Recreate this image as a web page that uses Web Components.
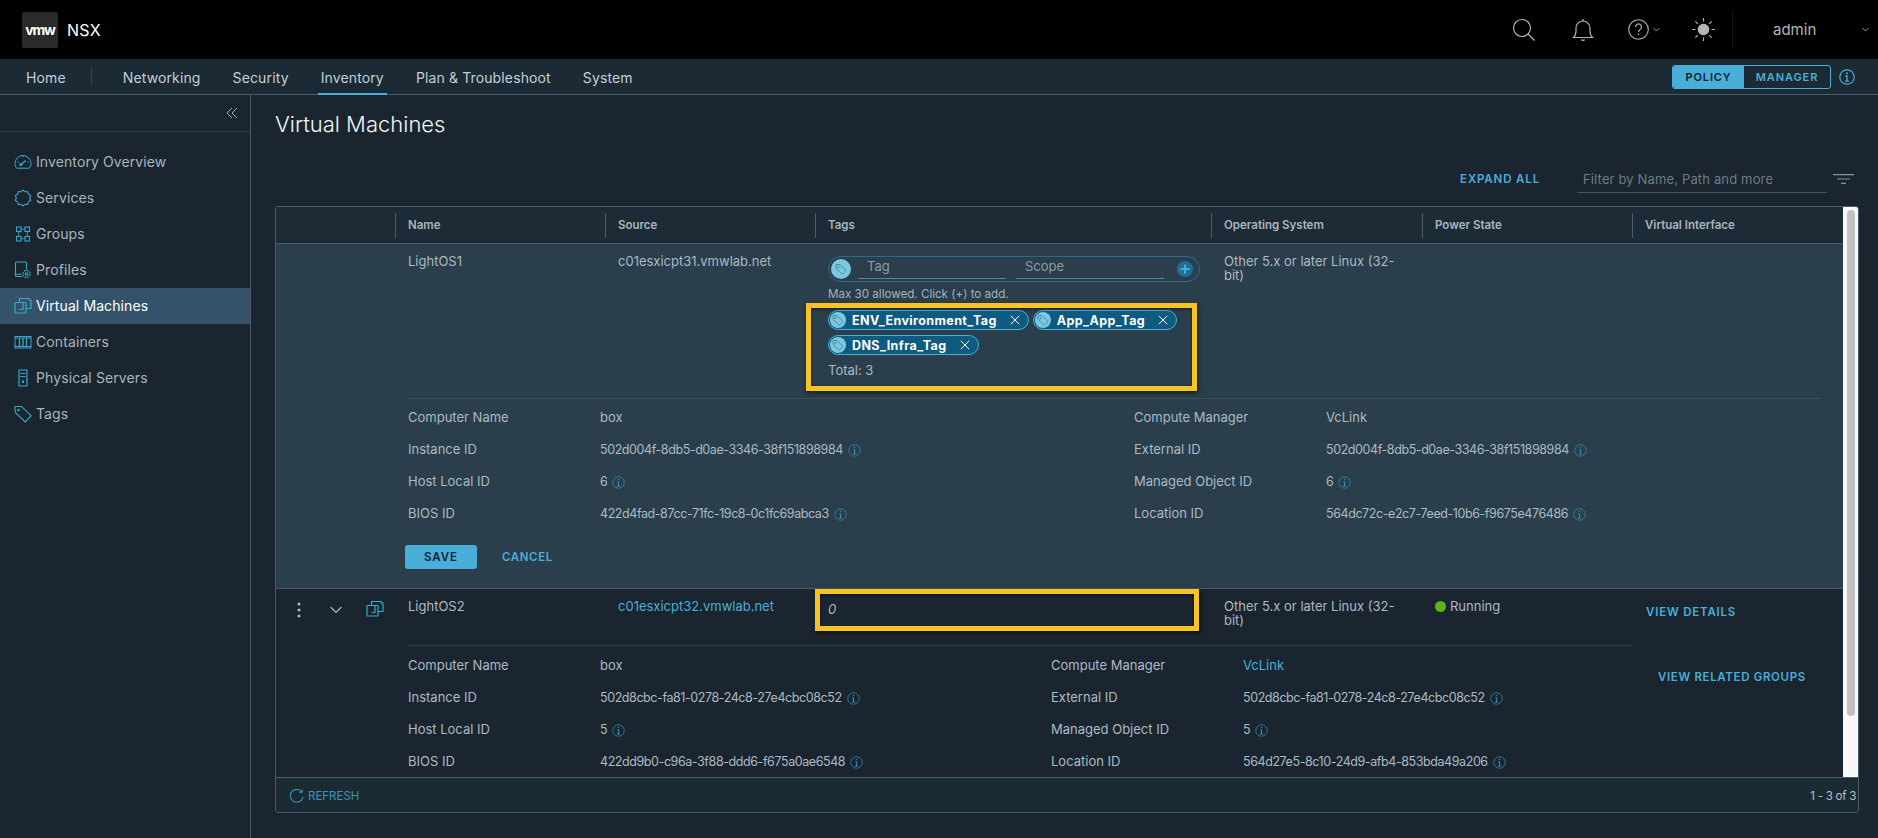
<!DOCTYPE html>
<html lang="en"><head><meta charset="utf-8"><title>NSX</title>
<style>
html,body{margin:0;padding:0;background:#1a2530;}
body{width:1878px;height:838px;overflow:hidden;font-family:Inter,"Liberation Sans",sans-serif;font-size:13px;color:#acbac3;display:flex;flex-direction:column;}
main{display:flex;flex:1;min-height:0;}
</style></head>
<body>
<nsx-header></nsx-header>
<nsx-nav>
  <nav-link plain>Home</nav-link><nav-sep></nav-sep>
  <nav-link>Networking</nav-link><nav-link>Security</nav-link><nav-link active>Inventory</nav-link><nav-link>Plan &amp; Troubleshoot</nav-link><nav-link>System</nav-link>
</nsx-nav>
<main>
  <nsx-sidebar>
    <side-item icon="gauge">Inventory Overview</side-item>
    <side-item icon="gear">Services</side-item>
    <side-item icon="groups">Groups</side-item>
    <side-item icon="profile">Profiles</side-item>
    <side-item icon="vm" active>Virtual Machines</side-item>
    <side-item icon="container">Containers</side-item>
    <side-item icon="server">Physical Servers</side-item>
    <side-item icon="tag">Tags</side-item>
  </nsx-sidebar>
  <vm-page>
    <vm-grid>
      <vm-row-one>
        <span slot="name">LightOS1</span>
        <span slot="source">c01esxicpt31.vmwlab.net</span>
        <span slot="os">Other 5.x or later Linux (32-bit)</span>
        <tag-editor slot="tags">
          <tag-pill>ENV_Environment_Tag</tag-pill>
          <tag-pill>App_App_Tag</tag-pill>
          <tag-pill>DNS_Infra_Tag</tag-pill>
        </tag-editor>
        <detail-grid slot="details" style="--split:726px">
          <detail-row label="Computer Name">box</detail-row>
          <detail-row label="Instance ID" info>502d004f-8db5-d0ae-3346-38f151898984</detail-row>
          <detail-row label="Host Local ID" info>6</detail-row>
          <detail-row label="BIOS ID" info>422d4fad-87cc-71fc-19c8-0c1fc69abca3</detail-row>
          <detail-row label="Compute Manager">VcLink</detail-row>
          <detail-row label="External ID" info>502d004f-8db5-d0ae-3346-38f151898984</detail-row>
          <detail-row label="Managed Object ID" info>6</detail-row>
          <detail-row label="Location ID" info>564dc72c-e2c7-7eed-10b6-f9675e476486</detail-row>
        </detail-grid>
      </vm-row-one>
      <vm-row-two>
        <span slot="name">LightOS2</span>
        <span slot="source">c01esxicpt32.vmwlab.net</span>
        <span slot="os">Other 5.x or later Linux (32-bit)</span>
        <detail-grid slot="details" style="--split:643px">
          <detail-row label="Computer Name">box</detail-row>
          <detail-row label="Instance ID" info>502d8cbc-fa81-0278-24c8-27e4cbc08c52</detail-row>
          <detail-row label="Host Local ID" info>5</detail-row>
          <detail-row label="BIOS ID" info>422dd9b0-c96a-3f88-ddd6-f675a0ae6548</detail-row>
          <detail-row label="Compute Manager" link>VcLink</detail-row>
          <detail-row label="External ID" info>502d8cbc-fa81-0278-24c8-27e4cbc08c52</detail-row>
          <detail-row label="Managed Object ID" info>5</detail-row>
          <detail-row label="Location ID" info>564d27e5-8c10-24d9-afb4-853bda49a206</detail-row>
        </detail-grid>
      </vm-row-two>
    </vm-grid>
  </vm-page>
</main>
<script>
const TEAL='#36a9c9';
const ICONS={
gauge:`<svg viewBox="0 0 18 18" fill="none" stroke="${TEAL}" stroke-width="1"><path d="M2.6 15.200h12.800c1-1.300 1.600-3 1.600-4.700A8 8 0 0 0 1 10.500c0 1.700.6 3.400 1.600 4.700z"/><path d="M7 11.600l4.800-4.100" stroke-width="1.300"/><circle cx="6.800" cy="11.600" r="1.100" fill="${TEAL}"/><path d="M9 2.800v1.500M3.400 9h1.300M13.400 9h1.300" stroke-width=".9"/></svg>`,
gear:`<svg viewBox="0 0 18 18" fill="none" stroke="${TEAL}" stroke-width="1.100"><path d="M9 1l2 1.800 2.700-.3.700 2.600 2.300 1.400-1 2.500 1 2.500-2.300 1.400-.7 2.600-2.700-.3L9 17l-2-1.800-2.700.3-.7-2.600-2.300-1.400 1-2.500-1-2.500 2.300-1.400.7-2.600 2.700.3z"/></svg>`,
groups:`<svg viewBox="0 0 18 18" fill="none" stroke="${TEAL}" stroke-width="1.100"><rect x="2.500" y="2" width="4.500" height="4.500"/><rect x="11" y="2" width="4.500" height="4.500"/><rect x="2.500" y="11.500" width="4.500" height="4.500"/><rect x="11" y="11.500" width="4.500" height="4.500"/><path d="M7 4.200h4M4.700 6.500v5M13.300 6.500v5M7 13.700h4" stroke-width=".9"/></svg>`,
profile:`<svg viewBox="0 0 18 18" fill="none" stroke="${TEAL}" stroke-width="1.100"><path d="M8 15.500H2.500a1 1 0 0 1-1-1V2a1 1 0 0 1 1-1h9a1 1 0 0 1 1 1v6.500"/><path d="M1.500 13.200h6"/><circle cx="12.500" cy="13" r="3.600" stroke-dasharray="2 .8"/><circle cx="12.500" cy="13" r="1.300"/></svg>`,
vm:`<svg viewBox="0 0 18 18" fill="none" stroke="${TEAL}" stroke-width="1.200"><path d="M5.500 5V1.500h9.500V3h2v8.500h-5.500"/><rect x="1" y="5.500" width="11" height="10.500" rx=".5"/><path d="M9 5.500v7H5.500"/></svg>`,
container:`<svg viewBox="0 0 18 18" fill="none" stroke="${TEAL}" stroke-width="1"><rect x="1" y="3.500" width="16" height="11.500"/><path d="M1 5h16M1 13.500h16"/><path d="M5.500 5v8.500M9 5v8.500M12.500 5v8.500" stroke-width="1.300"/></svg>`,
server:`<svg viewBox="0 0 18 18" fill="none" stroke="${TEAL}" stroke-width="1.200"><rect x="5" y="1" width="8" height="16" rx=".5"/><path d="M6.500 4.500h5M6.500 7.500h5" /><path d="M9 11.500v2.500" stroke-width="2"/></svg>`,
tag:`<svg viewBox="0 0 18 18" fill="none" stroke="${TEAL}" stroke-width="1.100"><path d="M1 4.500V1.500h6.500l9.700 9.200-5.900 6.300L1.700 8z"/><circle cx="4.500" cy="5" r=".8"/></svg>`,
info:`<svg viewBox="0 0 16 16" fill="none" stroke="currentColor"><circle cx="8" cy="8" r="7" stroke-width="1.200" stroke-dasharray="2.100 .4"/><path d="M8 3.500v1.500" stroke-width="1.700"/><path d="M6.500 7H8v5M6 12.200h4" stroke-width="1.300"/></svg>`,
infoBig:`<svg viewBox="0 0 16 16" fill="none" stroke="currentColor"><circle cx="8" cy="8" r="7.200" stroke-width="1.200"/><path d="M8 3.500v1.800" stroke-width="1.800"/><path d="M6.300 7H8v5M6 12.200h4" stroke-width="1.300"/></svg>`,
tagSmall:`<svg viewBox="0 0 16 16" fill="none" stroke="currentColor" stroke-width="1"><path d="M3 3.500h4l6 6-3.800 3.800-6.200-6z"/><circle cx="5.500" cy="6" r=".7"/></svg>`,
close:`<svg viewBox="0 0 10 10" fill="none" stroke="#fff" stroke-width="1"><path d="M.8.800l8.400 8.400M9.200.8L.8 9.200"/></svg>`
};
function define(name,html,extra){
  const tpl=document.createElement('template');tpl.innerHTML=html;
  customElements.define(name,class extends HTMLElement{
    constructor(){super();this.attachShadow({mode:'open'}).appendChild(tpl.content.cloneNode(true));}
    connectedCallback(){if(extra)extra(this,this.shadowRoot);}
  });
}
define('nsx-icon',`<style>:host{display:inline-flex;width:var(--s,18px);height:var(--s,18px);flex:none}span,svg{display:block;width:100%;height:100%}</style><span></span>`,
  (el,r)=>{r.querySelector('span').innerHTML=ICONS[el.getAttribute('name')]||'';});

define('nsx-header',`<style>
:host{display:flex;align-items:center;height:59px;background:#000;flex:none;position:relative}
.logo{width:36px;height:36px;margin-left:22px;background:#2a2a2a;border-radius:2px;display:flex;align-items:center;justify-content:center;color:#fff;font:700 14px/1 Inter,sans-serif;letter-spacing:-1.200px}
.nsx{margin-left:9px;color:#fff;font-size:16px;letter-spacing:.3px}
.right{margin-left:auto;display:flex;align-items:center;height:100%;color:#b4b4b4}
svg{display:block;flex:none}
.sep{width:1px;height:39px;background:#141414;margin-left:17px}
.admin{margin-left:40px;font-size:15px;width:81px}
</style>
<div class="logo">vmw</div><div class="nsx">NSX</div>
<div class="right">
<svg width="24" height="24" viewBox="0 0 24 24" fill="none" stroke="#b4b4b4" stroke-width="1.200" style="margin-right:36px"><circle cx="10" cy="10" r="8.500"/><path d="M16 16l6.500 6.500"/></svg>
<svg width="22" height="24" viewBox="0 0 22 24" fill="none" stroke="#b4b4b4" stroke-width="1.200" style="margin-right:34px"><path d="M1.500 19.500c2-1.700 2.500-3.500 2.500-6.500V10a7 7 0 0 1 14 0v3c0 3 .5 4.800 2.500 6.500z"/><path d="M11 1v2" /><path d="M9.500 21.500c.4 1.200 2.600 1.200 3 0" stroke-width="1.400"/></svg>
<svg width="21" height="21" viewBox="0 0 21 21" fill="none" stroke="#b4b4b4" stroke-width="1.100"><circle cx="10.500" cy="10.500" r="9.800"/><path d="M7.500 8a3 3 0 1 1 4.600 2.500c-1 .7-1.600 1.300-1.600 2.600M10.500 14.500v1.500" stroke-width="1.200"/></svg>
<svg width="7" height="5" viewBox="0 0 7 5" fill="none" stroke="#9a9a9a" style="margin:0 32px 0 4px"><path d="M.5 1l3 3 3-3"/></svg>
<svg width="23" height="23" viewBox="0 0 23 23" fill="#b4b4b4" stroke="#b4b4b4" stroke-width="1.200"><circle cx="11.500" cy="11.500" r="5.800" stroke="none"/><path d="M11.500 0v3.400M11.500 19.600V23M0 11.500h3.400M19.600 11.500H23M3.400 3.400l2.400 2.400M17.200 17.200l2.400 2.400M3.400 19.600l2.400-2.400M17.200 5.800l2.400-2.400" fill="none"/></svg>
<div class="sep"></div>
<div class="admin">admin</div>
<svg width="7" height="5" viewBox="0 0 7 5" fill="none" stroke="#9a9a9a" style="margin-right:9px;margin-left:8px"><path d="M.5 1l3 3 3-3"/></svg>
</div>`);

define('nsx-nav',`<style>
:host{display:flex;align-items:stretch;height:35px;background:#1b2a34;border-bottom:1px solid #4b5c68;flex:none;padding:0 23px 0 23px}
.bar{display:flex;align-items:stretch;gap:26px}
.mode{margin-left:auto;align-self:center;display:flex;align-items:center}
.seg{display:flex;height:24px;box-sizing:border-box;border:1px solid #49afd9;border-radius:3px;overflow:hidden;font-size:11px;font-weight:600;letter-spacing:.9px;width:159px}
.seg b{font-weight:600;display:flex;align-items:center;justify-content:center}
.p{width:71px;background:#49afd9;color:#0e2430}
.m{flex:1;color:#49afd9}
nsx-icon{--s:16px;color:#49afd9;margin-left:8px}
</style>
<div class="bar"><slot></slot></div>
<div class="mode"><div class="seg"><b class="p">POLICY</b><b class="m">MANAGER</b></div><nsx-icon name="infoBig"></nsx-icon></div>`);
define('nav-link',`<style>
:host{display:flex;align-items:center;padding:3px 3px 0;box-sizing:border-box;font-size:14px;letter-spacing:.13px;color:#c4cfd6;border-bottom:2px solid transparent;margin-bottom:-1px;white-space:nowrap;height:36px}
:host([active]){border-bottom-color:#49afd9;}
</style><slot></slot>`);
define('nav-sep',`<style>:host{display:block;width:1px;height:18px;background:#34444f;align-self:center;margin:-2px 2px 0 -4px}</style>`);

define('nsx-sidebar',`<style>
:host{display:block;width:250px;flex:none;border-right:1px solid #4b5c68;height:100%;box-sizing:content-box}
.top{height:36px;border-bottom:1px solid #2b3944;display:flex;align-items:center;justify-content:flex-end;padding-right:12px}
.list{padding-top:12px}
</style>
<div class="top"><svg width="12" height="12" viewBox="0 0 12 12" fill="none" stroke="#9fb0ba"><path d="M6 1L1 6l5 5M11 1L6 6l5 5"/></svg></div>
<div class="list"><slot></slot></div>`);
define('side-item',`<style>
:host{display:flex;align-items:center;height:36px;padding-left:14px;padding-bottom:1px;box-sizing:border-box;font-size:14px;letter-spacing:.1px;color:#a7b5be;gap:4px;white-space:nowrap}
:host([active]){background:#34536a;color:#fff}
nsx-icon{margin-top:1px}
</style><nsx-icon></nsx-icon><slot></slot>`,(el,r)=>{r.querySelector('nsx-icon').setAttribute('name',el.getAttribute('icon'));
 const i=r.querySelector('nsx-icon');i.shadowRoot.querySelector('span').innerHTML=ICONS[el.getAttribute('icon')];});

define('vm-page',`<style>
:host{display:flex;flex-direction:column;flex:1;min-width:0;padding:14px 19px 0 24px;box-sizing:border-box}
h1{margin:0;font-weight:300;font-size:22px;line-height:30px;color:#f2f5f6}
.tools{display:flex;align-items:center;justify-content:flex-end;height:28px;margin:26px 5px 13px 0}
.exp{font-size:11.500px;font-weight:600;letter-spacing:.85px;color:#49afd9;margin-right:37px}
.filter{width:244px;padding-left:6px;height:27px;line-height:28px;border-bottom:1px solid #44535e;font-size:13px;letter-spacing:.15px;color:#6d7b85}
svg{margin-left:6px;display:block}
</style>
<h1>Virtual Machines</h1>
<div class="tools"><span class="exp">EXPAND ALL</span><div class="filter">Filter by Name, Path and more</div>
<svg width="21" height="10" viewBox="0 0 21 10" fill="none" stroke="#8494a0" stroke-width="1.200"><path d="M0 .6h21M4 5h13M8 9.400h5"/></svg></div>
<slot></slot>`);

define('vm-grid',`<style>
:host{display:flex;flex-direction:column;height:607px;box-sizing:border-box;border:1px solid #4b5c68;border-radius:3px;overflow:hidden;background:#1a2530}
.body{display:flex;flex:1;min-height:0}
.col{flex:1;min-width:0;overflow:hidden}
.head{display:grid;grid-template-columns:119px 210px 210px 396px 211px 210px 211px;height:36px;background:#1d2b36;border-bottom:1px solid #4b5c68;align-items:center;font-size:11.500px;font-weight:600;color:#a9b6be}
.head div{height:25px;line-height:25px;padding-left:12px;border-left:1px solid #4b5c68}
.head div:first-child{border-left:0}
.bar{width:15px;background:#f8f8f8;flex:none;padding:3px 3px 0 4px;box-sizing:border-box}
.thumb{height:506px;background:#c1c1c1;border-radius:4px}
.foot{height:35px;box-sizing:border-box;border-top:1px solid #4b5c68;background:#1b2b34;display:flex;align-items:center;padding:1px 2px 0 14px;font-size:11.500px;color:#b4c0c8}
.refresh{display:flex;align-items:center;gap:4px;color:#3c93b8;font-size:11.500px}
.count{margin-left:auto;letter-spacing:-.25px}
</style>
<div class="body"><div class="col"><div class="head"><div></div><div>Name</div><div>Source</div><div>Tags</div><div>Operating System</div><div>Power State</div><div>Virtual Interface</div></div><slot></slot></div>
<div class="bar"><div class="thumb"></div></div></div>
<div class="foot"><span class="refresh"><svg width="14" height="14" viewBox="0 0 14 14" fill="none" stroke="#3c93b8" stroke-width="1.100"><path d="M11.800 3A6.400 6.400 0 1 0 13 7.500"/><path d="M9 3.300h3V.4"/></svg>REFRESH</span><span class="count">1 - 3 of 3</span></div>`);

define('vm-row-one',`<style>
:host{display:block;background:#2a3e4b;height:344px;box-sizing:border-box;position:relative;font-size:13px;color:#acbac3}
.main{margin-left:132px;margin-right:23px;border-bottom:1px solid #3a4e5b;height:155px;box-sizing:border-box;display:grid;grid-template-columns:210px 210px 396px 1fr;padding-top:10px;line-height:14px}
.tags{margin-top:2px}
.os{width:175px}
.det{margin:2px 0 0 132px}
.btns{margin:16px 0 0 129px;display:flex;align-items:center}
.save{width:72px;height:24px;background:#49afd9;color:#0e2430;border-radius:3px;display:flex;align-items:center;justify-content:center;font-size:11.500px;font-weight:600;letter-spacing:.9px}
.cancel{margin-left:25px;font-size:11.500px;font-weight:600;letter-spacing:.6px;color:#49afd9}
.box{position:absolute;left:530px;top:59px;width:391px;height:88px;box-sizing:border-box;border:5px solid #f8c324;box-shadow:1px 2px 4px rgba(0,0,0,.5),inset 0 1px 3px rgba(0,0,0,.6)}
</style>
<div class="main"><div><slot name="name"></slot></div><div><slot name="source"></slot></div><div class="tags"><slot name="tags"></slot></div><div class="os"><slot name="os"></slot></div></div>
<div class="det"><slot name="details"></slot></div>
<div class="btns"><span class="save">SAVE</span><span class="cancel">CANCEL</span></div>
<div class="box"></div>`);

define('vm-row-two',`<style>
:host{display:block;height:190px;border-top:1px solid #4b5c68;box-sizing:border-box;position:relative;font-size:13px;color:#acbac3;background:#1a2530}
.wrap{display:flex;height:100%}
.left{width:1356px;flex:none}
.top{display:grid;grid-template-columns:119px 210px 210px 396px 211px;height:57px;box-sizing:border-box;padding-top:10px;line-height:14px;position:relative}
.line{position:absolute;left:132px;right:0;bottom:0;height:1px;background:#303f4a}
.ctl{display:flex;align-items:flex-start;padding-left:21px}
.ctl svg{display:block;flex:none}
.n,.s,.t,.o{padding-left:13px}
.s{color:#49afd9}
.t{font-style:italic;margin-top:3px}
.o{width:175px;box-sizing:content-box}
.p{display:flex;align-items:flex-start;gap:4px;position:absolute;left:1159px;top:10px}
.dot{width:11px;height:11px;border-radius:50%;background:#60b515;margin-top:2px;flex:none}
.det{margin:3px 0 0 132px}
.act{flex:1;padding:16px 0 0 14px;font-size:11.500px;font-weight:600;letter-spacing:.8px;color:#49afd9;display:flex;flex-direction:column;align-items:flex-start;gap:51px;line-height:14px}
.act span+span{margin-left:12px;letter-spacing:.65px}
.box{position:absolute;left:539px;top:0;width:384px;height:42px;box-sizing:border-box;border:5px solid #f8c324;box-shadow:1px 2px 4px rgba(0,0,0,.5),inset 0 1px 3px rgba(0,0,0,.6)}
</style>
<div class="wrap"><div class="left">
<div class="top">
<div class="ctl"><svg width="4" height="16" viewBox="0 0 4 16" fill="#acbac3" style="margin-top:3px"><circle cx="2" cy="2" r="1.500"/><circle cx="2" cy="8" r="1.500"/><circle cx="2" cy="14" r="1.500"/></svg>
<svg width="12" height="8" viewBox="0 0 12 8" fill="none" stroke="#acbac3" stroke-width="1.200" style="margin:7px 0 0 29px"><path d="M.6 1l5.400 5.500L11.400 1"/></svg>
<nsx-icon name="vm" style="margin-left:24px;margin-top:1px"></nsx-icon></div>
<div class="n"><slot name="name"></slot></div><div class="s"><slot name="source"></slot></div>
<div class="t">0</div><div class="o"><slot name="os"></slot></div>
<div class="line"></div>
<div class="p"><i class="dot"></i>Running</div>
</div>
<div class="det"><slot name="details"></slot></div>
</div>
<div class="act"><span>VIEW DETAILS</span><span>VIEW RELATED GROUPS</span></div>
</div>
<div class="box"></div>`);

define('tag-editor',`<style>
:host{display:block;width:372px;color:#acbac3}
.input{height:26px;box-sizing:border-box;border:1px solid #2c6a8c;border-radius:13px;display:flex;align-items:center;padding-left:2px;position:relative}
.c{width:20px;height:20px;border-radius:50%;background:#7cc8e0;color:#4c8aa5;display:flex;align-items:center;justify-content:center;flex:none}
.c nsx-icon{--s:16px}
.f{height:20px;line-height:15px;border-bottom:1px solid #6b7e8a;box-sizing:border-box;padding-left:9px;font-size:13px;color:#8c9ca7;width:148px;margin-left:7px}
.f+.f{margin-left:10px}
.plus{width:16px;height:16px;border-radius:50%;background:#1d6f96;margin-left:13px;flex:none}
.plus svg{display:block}
.hint{font-size:11.600px;line-height:16px;margin-top:4px;color:#a4b3bd}
.pills{display:flex;flex-wrap:wrap;gap:5px 4px;margin-top:8px;width:360px;line-height:normal}
.total{font-size:13px;line-height:16px;margin-top:7px}
</style>
<div class="input"><span class="c"><nsx-icon name="tagSmall"></nsx-icon></span><span class="f">Tag</span><span class="f">Scope</span><span class="plus"><svg width="16" height="16" viewBox="0 0 16 16" stroke="#49afd9" stroke-width="2"><path d="M8 3.500v9M3.500 8h9"/></svg></span></div>
<div class="hint">Max 30 allowed. Click (+) to add.</div>
<div class="pills"><slot></slot></div>
<div class="total">Total: 3</div>`);
define('tag-pill',`<style>
:host{display:inline-flex;align-items:center;height:20px;box-sizing:border-box;border:1px solid #49afd9;border-radius:10px;background:#0f5a80;color:#fff;font-size:12.500px;letter-spacing:.4px;font-weight:700;padding:0 8px 0 1px;white-space:nowrap}
.c{width:16px;height:16px;border-radius:50%;background:#7cc8e0;color:#4c8aa5;flex:none;margin-right:6px;display:block}
.c nsx-icon{--s:16px;display:block}
.x{margin-left:13px;flex:none;--s:10px}
</style><span class="c"><nsx-icon name="tagSmall"></nsx-icon></span><slot></slot><nsx-icon class="x" name="close"></nsx-icon>`);

define('detail-grid',`<style>
:host{display:grid;grid-auto-flow:column;grid-template-rows:repeat(4,32px);grid-template-columns:var(--split) 1fr}
</style><slot></slot>`);
define('detail-row',`<style>
:host{display:flex;align-items:center;font-size:13px;color:#acbac3;white-space:nowrap}
.l{width:192px;flex:none}
:host([link]) .v{color:#49afd9}
:host([info]) .v{font-size:12.500px;letter-spacing:-.42px}
nsx-icon{--s:13px;color:#2f8db3;margin:2px 0 0 5px;display:none}
:host([info]) nsx-icon{display:inline-flex}
</style><span class="l"></span><span class="v"><slot></slot></span><nsx-icon name="info"></nsx-icon>`,
(el,r)=>{r.querySelector('.l').textContent=el.getAttribute('label');});
</script>
</body></html>
